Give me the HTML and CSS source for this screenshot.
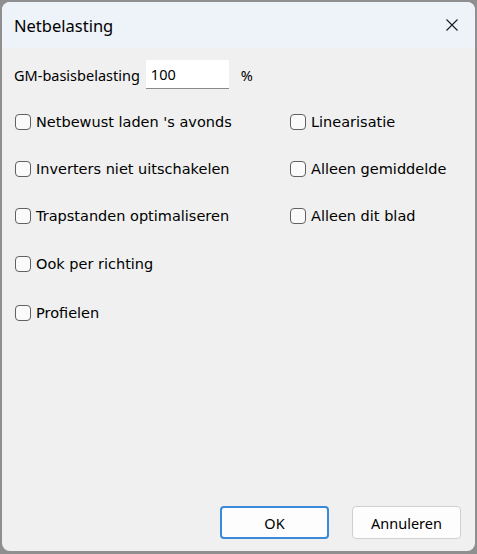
FILE: index.html
```html
<!DOCTYPE html>
<html>
<head>
<meta charset="utf-8">
<link rel="stylesheet" href="styles.css">
</head>
<body>
<div class="window">
  <div class="titlebar">
    <span class="title">Netbelasting</span>
    <span class="close"><svg width="12" height="12" viewBox="0 0 12 12"><path d="M0.5 0.5 L11.5 11.5 M11.5 0.5 L0.5 11.5" stroke="#1a1a1a" stroke-width="1.1" fill="none"/></svg></span>
  </div>
  <div class="content">
    <div class="baserow">
      <span class="label">GM-basisbelasting</span>
      <span class="input">100</span>
      <span class="unit">%</span>
    </div>
    <div class="grid">
      <label class="check"><span class="box"></span><span>Netbewust laden 's avonds</span></label>
      <label class="check"><span class="box"></span><span>Linearisatie</span></label>
      <label class="check"><span class="box"></span><span>Inverters niet uitschakelen</span></label>
      <label class="check"><span class="box"></span><span>Alleen gemiddelde</span></label>
      <label class="check"><span class="box"></span><span>Trapstanden optimaliseren</span></label>
      <label class="check"><span class="box"></span><span>Alleen dit blad</span></label>
      <label class="check"><span class="box"></span><span>Ook per richting</span></label>
      <span></span>
      <label class="check"><span class="box"></span><span>Profielen</span></label>
    </div>
    <div class="spacer"></div>
    <div class="buttons">
      <button class="btn primary">OK</button>
      <button class="btn">Annuleren</button>
    </div>
  </div>
</div>
</body>
</html>
```

FILE: styles.css
```css
html, body {
  margin: 0;
  padding: 0;
}
body {
  background: #8f8f8f;
  width: 477px;
  height: 554px;
  overflow: hidden;
  font-family: "Noto Sans", "DejaVu Sans", sans-serif;
  color: #000;
}
.window {
  margin: 2px 0 0 2px;
  width: 473px;
  height: 549px;
  border-radius: 8px;
  background: #f0f0f0;
  overflow: hidden;
  display: flex;
  flex-direction: column;
}
.titlebar {
  height: 46px;
  background: #eef3f9;
  display: flex;
  align-items: center;
  justify-content: space-between;
  padding: 0 17px 0 12px;
  flex-shrink: 0;
}
.title {
  font-size: 16.5px;
  color: #000;
}
.close {
  display: flex;
  width: 12px;
  height: 12px;
}
.content {
  flex: 1;
  display: flex;
  flex-direction: column;
  padding: 12px 13px 12px 12px;
  font-size: 14.5px;
}
.baserow {
  display: flex;
  align-items: center;
  height: 29px;
}
.label {
  color: #000;
}
.input {
  margin-left: 6px;
  width: 83px;
  height: 29px;
  background: #fff;
  border-bottom: 1px solid #8a8a8a;
  box-sizing: border-box;
  padding-left: 5px;
  display: flex;
  align-items: center;
}
.unit {
  margin-left: 12px;
}
.grid {
  display: grid;
  grid-template-columns: 275px 1fr;
  grid-template-rows: 47px 47px 47px 50px 47px;
  margin-top: 9px;
  align-items: center;
  font-family: "DejaVu Sans", sans-serif;
  font-size: 14.5px;
}
.check {
  display: flex;
  align-items: center;
  gap: 5px;
  padding-left: 1px;
}
.box {
  border: 1px solid #616161;
  border-radius: 4px;
  background: #fafafa;
  box-sizing: border-box;
  flex-shrink: 0;
  width: 16px;
  height: 16px;
}
.spacer {
  flex: 1;
}
.buttons {
  display: flex;
  justify-content: flex-end;
  gap: 23px;
  padding-right: 1px;
}
.btn {
  width: 109px;
  height: 33px;
  font-family: inherit;
  font-size: 14.5px;
  background: #fdfdfd;
  border: 1px solid #d0d0d0;
  border-radius: 4px;
  color: #000;
  padding: 0;
}
.btn.primary {
  border: 2px solid #3b8ad9;
}
```
